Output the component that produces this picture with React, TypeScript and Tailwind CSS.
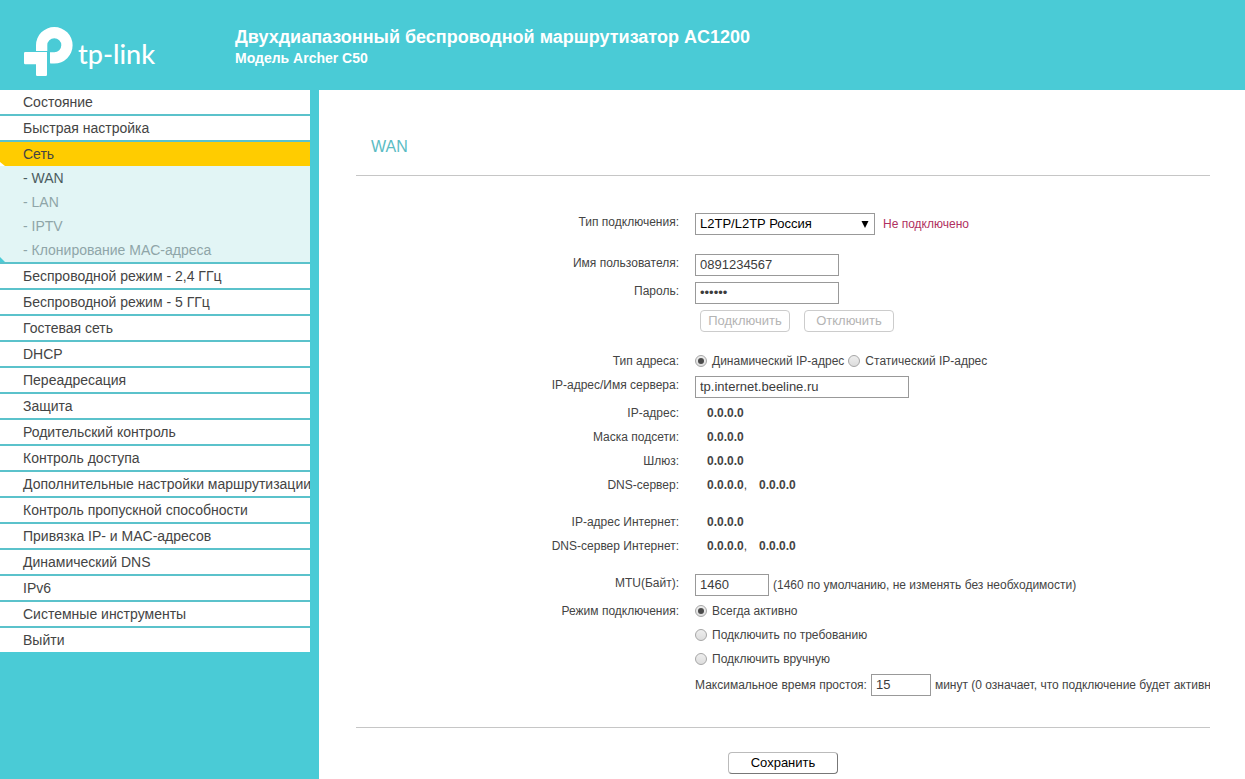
import type { ReactNode } from 'react'

type MenuItem = {
  label: string
  active?: boolean
  children?: string[]
}

const menu: MenuItem[] = [
  { label: 'Состояние' },
  { label: 'Быстрая настройка' },
  { label: 'Сеть', active: true, children: ['WAN', 'LAN', 'IPTV', 'Клонирование MAC-адреса'] },
  { label: 'Беспроводной режим - 2,4 ГГц' },
  { label: 'Беспроводной режим - 5 ГГц' },
  { label: 'Гостевая сеть' },
  { label: 'DHCP' },
  { label: 'Переадресация' },
  { label: 'Защита' },
  { label: 'Родительский контроль' },
  { label: 'Контроль доступа' },
  { label: 'Дополнительные настройки маршрутизации' },
  { label: 'Контроль пропускной способности' },
  { label: 'Привязка IP- и MAC-адресов' },
  { label: 'Динамический DNS' },
  { label: 'IPv6' },
  { label: 'Системные инструменты' },
  { label: 'Выйти' },
]

const inputClass = 'h-[22px] border border-[#999] bg-white px-1 text-[13px] text-[#3c3c3c] outline-none'
const buttonClass = 'h-[22px] rounded border bg-white text-[13px] leading-5'

function Logo() {
  return (
    <div className="flex items-start text-white">
      <svg width="50" height="50" viewBox="0 0 50 50" className="shrink-0" fill="currentColor" aria-hidden="true">
        <path d="M1.200 25H23v22.800a1.200 1.200 0 0 1-1.200 1.200H13.200a1.200 1.200 0 0 1-1.200-1.200V37.200H1.200A1.200 1.200 0 0 1 0 36V26.200A1.200 1.200 0 0 1 1.200 25z" />
        <path d="M12 24V18.300A18.300 18.300 0 1 1 30.300 36.600H27.200a1.200 1.200 0 0 1-1.200-1.200V25.300H30.300A7 7 0 1 0 23.300 18.300V24z" />
      </svg>
      <span className="mt-[11px] ml-1 font-['Lato',sans-serif] text-[27px] leading-8 font-medium">tp-link</span>
    </div>
  )
}

function Sidebar() {
  return (
    <nav className="w-[310px] shrink-0">
      <ul className="flex flex-col gap-0.5 bg-[#5bc2cb] text-sm leading-6 text-[#444]">
        {menu.map((item) => (
          <li key={item.label}>
            <a
              href="#"
              className={
                item.active
                  ? 'relative block h-6 overflow-hidden bg-[#fc0] pl-[23px] whitespace-nowrap'
                  : 'block h-6 overflow-hidden bg-white pl-[23px] whitespace-nowrap'
              }
            >
              {item.label}
              {item.active && (
                <svg width="5" height="4" className="absolute bottom-0 left-0" aria-hidden="true">
                  <path d="M0 0l5 4H0z" fill="#fff" />
                </svg>
              )}
            </a>
            {item.children && (
              <ul className="relative bg-[#e2f5f5]">
                {item.children.map((child, i) => (
                  <li key={child}>
                    <a href="#" className={i === 0 ? 'block pl-[23px] text-[#4b5c60]' : 'block pl-[23px] text-[#8fa5a8]'}>
                      - {child}
                    </a>
                  </li>
                ))}
                <svg width="5" height="5" className="absolute bottom-0 left-0" aria-hidden="true">
                  <path d="M0 0l5 5H0z" fill="#4acbd6" />
                </svg>
              </ul>
            )}
          </li>
        ))}
      </ul>
    </nav>
  )
}

function Row({ label, htmlFor, children }: { label?: string; htmlFor?: string; children: ReactNode }) {
  return (
    <div className="flex gap-4">
      <div className="w-[323px] shrink-0 text-right">
        {label && (htmlFor ? <label htmlFor={htmlFor}>{label}</label> : label)}
      </div>
      <div className="min-w-0 flex-1">{children}</div>
    </div>
  )
}

function Radio({ name, label, checked }: { name: string; label: string; checked?: boolean }) {
  return (
    <label className="flex h-6 items-center gap-[5px] whitespace-nowrap">
      <input
        type="radio"
        name={name}
        defaultChecked={checked}
        className="flex size-3 shrink-0 appearance-none items-center justify-center rounded-full border border-[#a6a6a6] bg-linear-to-b from-[#eee] to-[#ddd] checked:before:size-1.5 checked:before:rounded-full checked:before:bg-[#4a4a4a] checked:before:content-['']"
      />
      {label}
    </label>
  )
}

function Values({ items }: { items: string[] }) {
  return (
    <div className="flex gap-3 pl-3">
      {items.map((item, i) => (
        <span key={i}>
          <b>{item}</b>
          {i < items.length - 1 && ','}
        </span>
      ))}
    </div>
  )
}

export default function App() {
  return (
    <div className="flex min-h-screen flex-col bg-[#4acbd6] font-['Liberation_Sans',Arial,sans-serif]">
      <header className="flex h-[90px] shrink-0 pl-6 text-white">
        <div className="w-[211px] shrink-0 pt-[27px]">
          <Logo />
        </div>
        <div className="pt-[25px] font-bold">
          <h1 className="text-lg leading-6">Двухдиапазонный беспроводной маршрутизатор AC1200</h1>
          <p className="text-sm leading-[18px]">Модель Archer C50</p>
        </div>
      </header>

      <div className="flex flex-1 gap-[9px]">
        <Sidebar />

        <main className="min-w-0 flex-1 bg-white pt-[45px] pr-[35px] pl-[37px]">
          <h2 className="border-b border-[#c6c6c6] pb-4 pl-[15px] text-base leading-6 text-[#5bbcc4]">WAN</h2>

          <form onSubmit={(e) => e.preventDefault()}>
            <div className="flex flex-col gap-[13px] overflow-hidden pt-[34px] pb-7 text-xs leading-6 text-[#444]">
              <Row label="Тип подключения:" htmlFor="type">
                <div className="flex h-7 items-center gap-2">
                  <div className="relative">
                    <select
                      id="type"
                      className="block h-[22px] w-[180px] appearance-none border border-[#999] bg-white px-1 text-[13px] leading-5 text-black outline-none"
                    >
                      <option>L2TP/L2TP Россия</option>
                    </select>
                    <svg width="8" height="7" className="pointer-events-none absolute top-2 right-[6px]" aria-hidden="true">
                      <path d="M0.500 0h7L4 7z" fill="#000" />
                    </svg>
                  </div>
                  <span className="text-[#b03060]">Не подключено</span>
                </div>
              </Row>

              <div>
                <Row label="Имя пользователя:" htmlFor="user">
                  <div className="flex h-7 items-center">
                    <input id="user" type="text" defaultValue="0891234567" className={`${inputClass} w-36`} />
                  </div>
                </Row>
                <Row label="Пароль:" htmlFor="password">
                  <div className="flex h-7 items-center">
                    <input id="password" type="password" defaultValue="123456" className={`${inputClass} w-36`} />
                  </div>
                </Row>
                <Row>
                  <div className="flex gap-[14px] pt-[3px] pb-1 pl-[5px]">
                    <button type="button" disabled className={`${buttonClass} w-[90px] border-[#ccc] text-[#b4b4b4]`}>
                      Подключить
                    </button>
                    <button type="button" disabled className={`${buttonClass} w-[90px] border-[#ccc] text-[#b4b4b4]`}>
                      Отключить
                    </button>
                  </div>
                </Row>
              </div>

              <div>
                <Row label="Тип адреса:">
                  <div className="flex gap-1">
                    <Radio name="address" label="Динамический IP-адрес" checked />
                    <Radio name="address" label="Статический IP-адрес" />
                  </div>
                </Row>
                <Row label="IP-адрес/Имя сервера:" htmlFor="server">
                  <div className="flex h-7 items-center">
                    <input id="server" type="text" defaultValue="tp.internet.beeline.ru" className={`${inputClass} w-[214px]`} />
                  </div>
                </Row>
                <Row label="IP-адрес:">
                  <Values items={['0.0.0.0']} />
                </Row>
                <Row label="Маска подсети:">
                  <Values items={['0.0.0.0']} />
                </Row>
                <Row label="Шлюз:">
                  <Values items={['0.0.0.0']} />
                </Row>
                <Row label="DNS-сервер:">
                  <Values items={['0.0.0.0', '0.0.0.0']} />
                </Row>
              </div>

              <div>
                <Row label="IP-адрес Интернет:">
                  <Values items={['0.0.0.0']} />
                </Row>
                <Row label="DNS-сервер Интернет:">
                  <Values items={['0.0.0.0', '0.0.0.0']} />
                </Row>
              </div>

              <div>
                <Row label="MTU(Байт):" htmlFor="mtu">
                  <div className="flex h-7 items-center gap-1 whitespace-nowrap">
                    <input id="mtu" type="text" defaultValue="1460" className={`${inputClass} w-[74px]`} />
                    <span>(1460 по умолчанию, не изменять без необходимости)</span>
                  </div>
                </Row>
                <Row label="Режим подключения:">
                  <Radio name="mode" label="Всегда активно" checked />
                  <Radio name="mode" label="Подключить по требованию" />
                  <Radio name="mode" label="Подключить вручную" />
                  <div className="flex h-7 items-center gap-1 whitespace-nowrap">
                    <label htmlFor="idle">Максимальное время простоя:</label>
                    <input id="idle" type="text" defaultValue="15" className={`${inputClass} w-[60px] shrink-0`} />
                    <span>минут (0 означает, что подключение будет активно всегда)</span>
                  </div>
                </Row>
              </div>
            </div>

            <div className="flex justify-center border-t border-[#c6c6c6] pt-6 pb-1">
              <button
                type="submit"
                className={`${buttonClass} w-[110px] border-t-[#bbb] border-r-[#777] border-b-[#777] border-l-[#bbb] text-black`}
              >
                Сохранить
              </button>
            </div>
          </form>
        </main>
      </div>
    </div>
  )
}
